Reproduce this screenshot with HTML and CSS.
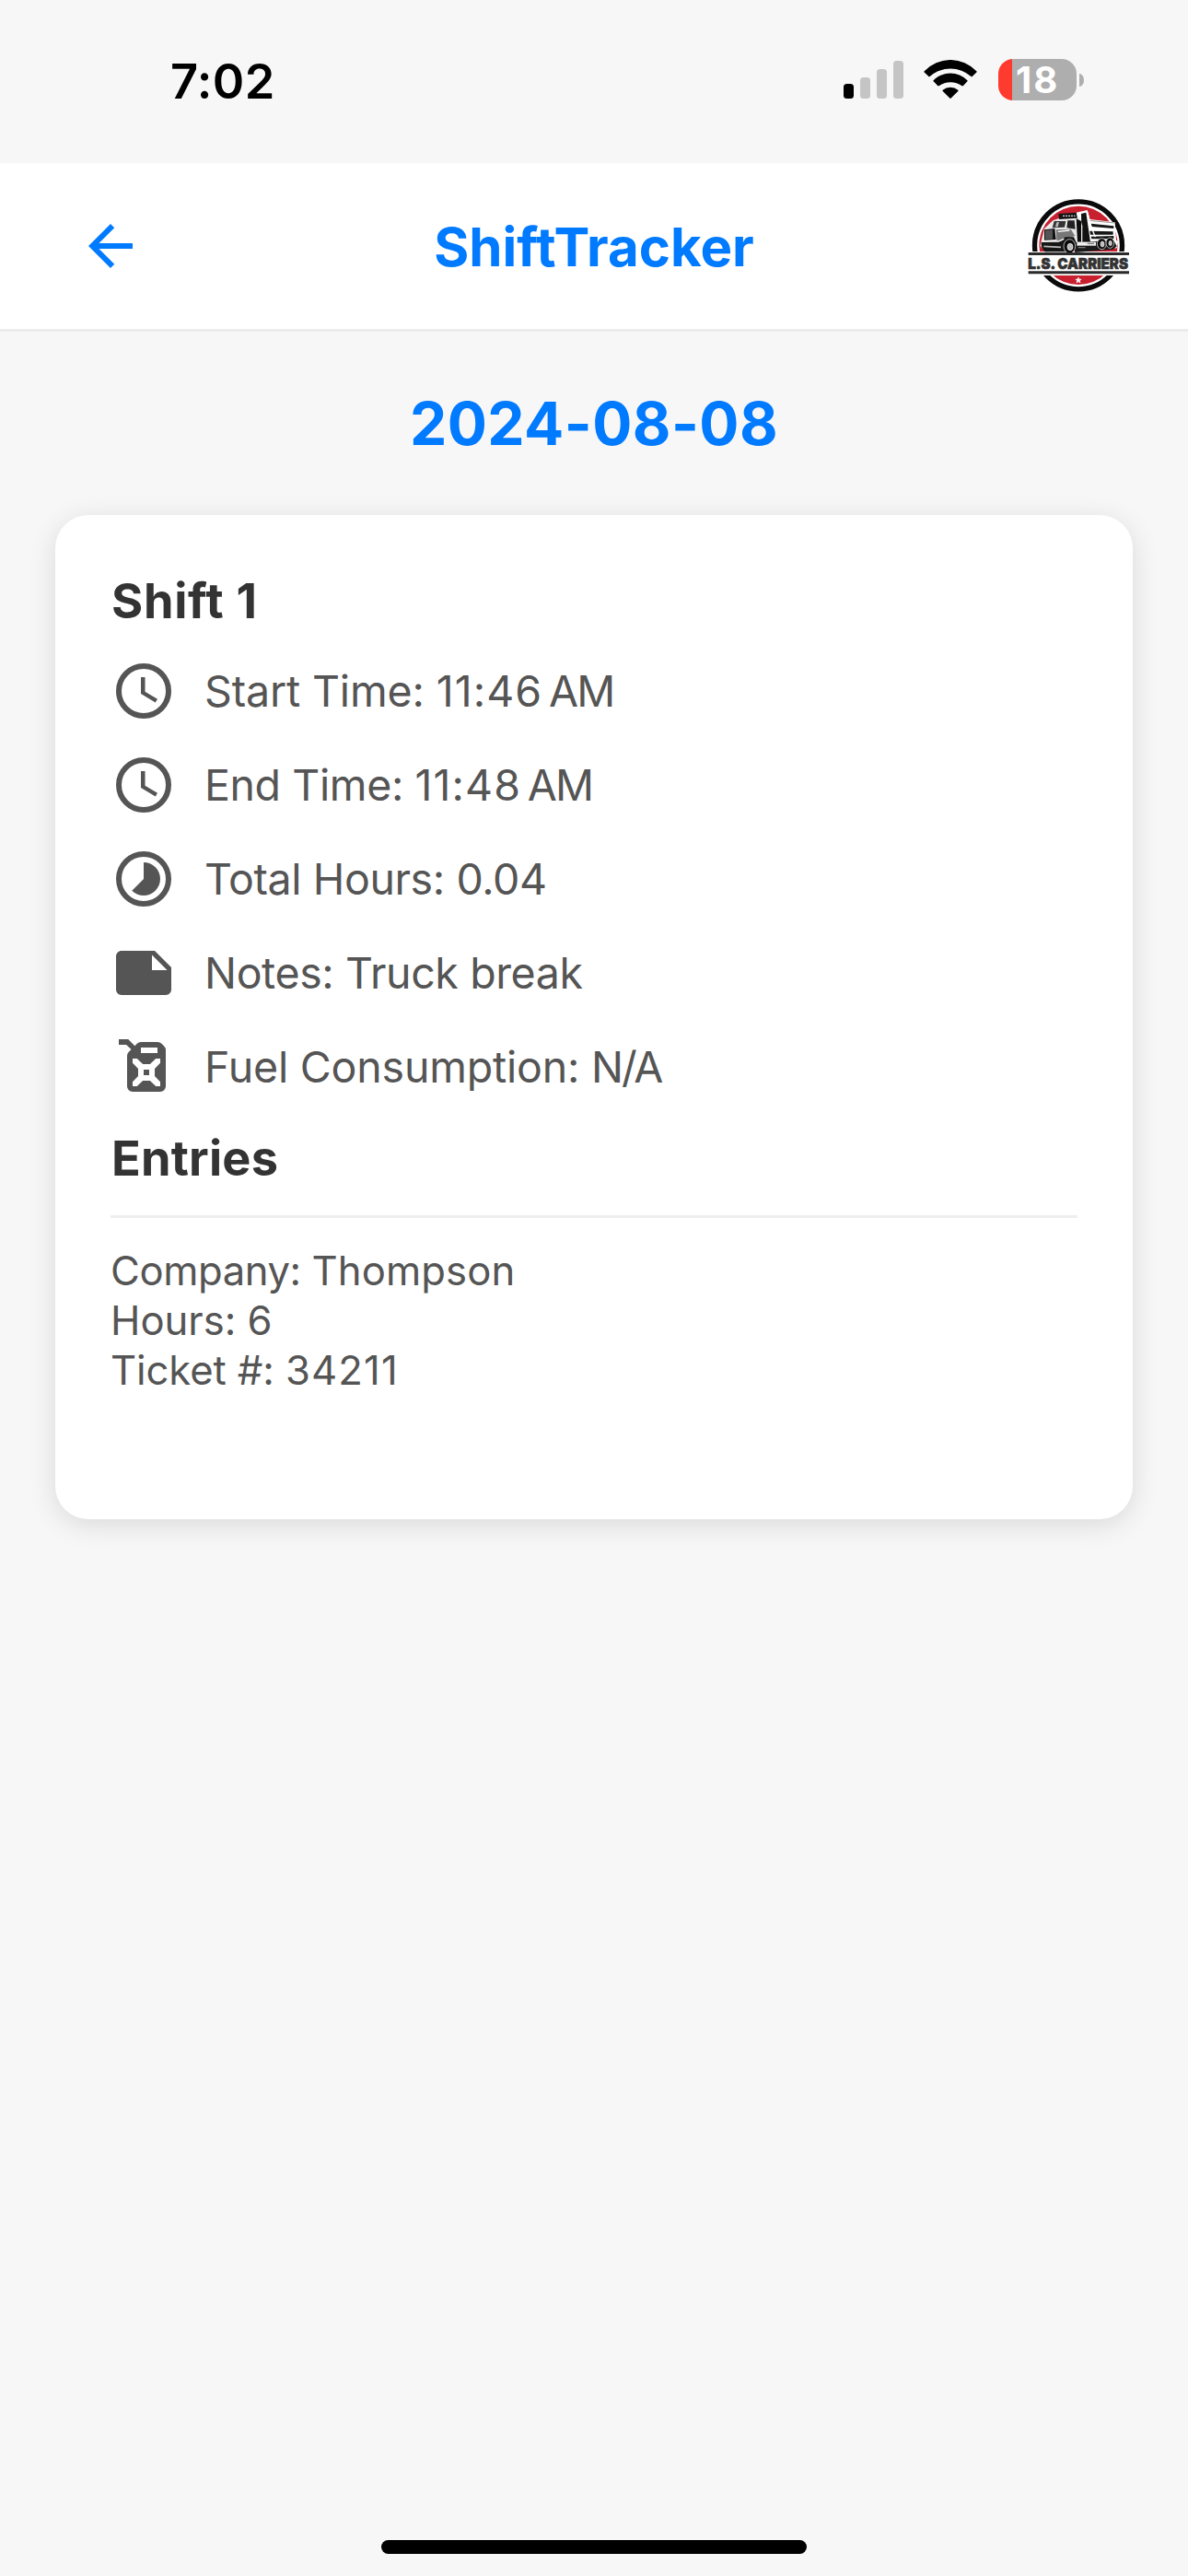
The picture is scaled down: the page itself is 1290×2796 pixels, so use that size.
FILE: index.html
```html
<!DOCTYPE html>
<html lang="en">
<head>
<meta charset="utf-8">
<title>ShiftTracker</title>
<link rel="stylesheet" href="styles.css">
</head>
<body>
<div class="screen">
  <div class="status-bar">
    <span class="clock">7:02</span>
    <div class="status-icons">
      <div class="signal"><i class="bar bar-1"></i><i class="bar bar-2"></i><i class="bar bar-3"></i><i class="bar bar-4"></i></div>
      <svg class="wifi" viewBox="370 75 175 126" aria-hidden="true">
        <path d="M372 111.500A117.500 117.500 0 0 1 543 111.500Q545 113.500 543 115.500L529 129Q527.500 130.500 525.500 129A101.500 101.500 0 0 0 390 129Q388 130.500 386.500 129L372 115.500Q370.500 113.500 372 111.500Z"/>
        <path d="M402 141.500A77.500 77.500 0 0 1 513 141.500Q515 143 513 145L499 159.500Q497.500 161 495.500 159.500A67 67 0 0 0 420 159.500Q418 161 416.500 159.500L402 145Q400.500 143 402 141.500Z"/>
        <path d="M432.500 173.500A38 38 0 0 1 482.500 173.500Q484 175 482.500 177L459.500 200Q457.500 202 455.500 200L432.500 177Q431 175 432.500 173.500Z"/>
      </svg>
      <div class="battery"><div class="battery-body">18</div><div class="battery-cap"></div></div>
    </div>
  </div>

  <header class="app-header">
    <svg class="icon back" viewBox="0 0 24 24" aria-label="Back"><path d="M20 11H7.830l5.590-5.590L12 4l-8 8 8 8 1.410-1.410L7.830 13H20v-2z"/></svg>
    <h1 class="app-title">ShiftTracker</h1>
    <svg class="logo" viewBox="0 0 480 390" aria-label="L.S. Carriers">
      <circle cx="243" cy="199" r="142.500" fill="#fff" stroke="#0b0b0b" stroke-width="16"/>
      <circle cx="243" cy="199" r="128" fill="#c8202f"/>
      <rect x="76" y="219" width="336" height="78" fill="#fff"/>
      <!-- dump body -->
      <path d="M236 92l36-8 8 30 82 10 4 58 6 4-4 22-120 6-22-60z" fill="#fff"/>
      <path d="M252 96l16-4 14 96h-28z" fill="#111"/>
      <path d="M284 128l74 8v8l-72-6zM280 152l76 2v10h-74zM284 170l74-2v10h-72z" fill="#161616"/>
      <path d="M276 118l86 8" stroke="#999" stroke-width="3"/>
      <path d="M272 90l14 52 12 30" fill="none" stroke="#fff" stroke-width="4"/>
      <!-- cab and bonnet -->
      <path d="M160 118l28-10 58 0 10 28v56l-24 18-96 12-18-22 14-56z" fill="#e9e9e9"/>
      <path d="M178 96l58-4 4 18-60 4z" fill="#151515"/>
      <path d="M192 103h40" stroke="#ddd" stroke-width="4" stroke-dasharray="6 3"/>
      <path d="M164 120h38l-4 20-40 2z" fill="#343434"/>
      <path d="M172 124l8-1-4 16h-8z" fill="#bbb"/>
      <path d="M208 118h22l3 28-28-4z" fill="#222"/>
      <path d="M236 112l16 8v68h-12z" fill="#0d0d0d"/>
      <path d="M132 148l34-4 4 36-38 2z" fill="#111"/>
      <path d="M138 150v30M144 149v30M150 149v30M156 148v31" stroke="#ddd" stroke-width="2"/>
      <path d="M170 148l48-2 14 22-18 6-18 10-24-2z" fill="#777"/>
      <path d="M176 154l38-4" stroke="#fff" stroke-width="4"/>
      <path d="M122 188l66-4 12-12h28l10 22-20 26-84 0q-14-12-12-32z" fill="#161616"/>
      <path d="M124 186h54l18-8" fill="none" stroke="#fff" stroke-width="4"/>
      <path d="M130 202l56 3" stroke="#bbb" stroke-width="5"/>
      <path d="M228 190l130-8 10 20-12 10-124 10z" fill="#1a1a1a"/>
      <path d="M238 188h62v12h-62z" fill="#eee"/>
      <path d="M242 206h24M272 193h22" stroke="#777" stroke-width="4"/>
      <g fill="#0b0b0b" stroke="#fff" stroke-width="2">
        <ellipse cx="214" cy="202" rx="19" ry="23"/>
        <ellipse cx="319" cy="194" rx="15" ry="18"/>
        <ellipse cx="346" cy="191" rx="13" ry="17"/>
      </g>
      <g fill="#bbb" stroke="#fff" stroke-width="2">
        <ellipse cx="216" cy="204" rx="9" ry="11"/>
        <ellipse cx="321" cy="195" rx="6" ry="9"/>
        <ellipse cx="347" cy="192" rx="5" ry="8"/>
      </g>
      <path d="M80 222h328v9H80zM80 283h328v9H80z" fill="#2b2b2b"/>
      <text class="logo-text" x="79" y="276" textLength="326" lengthAdjust="spacingAndGlyphs">L.S. CARRIERS</text>
      <path d="M243 303l2.400 6.600h7l-5.600 4.200 2.100 6.900-5.900-4.200-5.900 4.200 2.100-6.900-5.600-4.200h7z" fill="#fff" stroke="#fff" stroke-width="2"/>
    </svg>
  </header>

  <main class="content">
    <h2 class="date">2024-08-08</h2>
    <section class="card">
      <h3 class="heading shift-name">Shift 1</h3>
      <ul class="details">
        <li class="row"><svg class="icon" viewBox="0 0 24 24"><circle class="ring" cx="12" cy="12" r="9"/><path d="M12.500 7H11v6l5.250 3.150.750-1.230-4.500-2.670z"/></svg><span><span class="label-start">Start Time: </span><span class="time">11:46</span><span class="meridiem">&#8239;AM</span></span></li>
        <li class="row"><svg class="icon" viewBox="0 0 24 24"><circle class="ring" cx="12" cy="12" r="9"/><path d="M12.500 7H11v6l5.250 3.150.750-1.230-4.500-2.670z"/></svg><span>End Time: <span class="time">11:48</span><span class="meridiem">&#8239;AM</span></span></li>
        <li class="row"><svg class="icon" viewBox="0 0 24 24"><circle class="ring" cx="12" cy="12" r="9"/><path d="M16.240 7.760C15.070 6.590 13.540 6 12 6v6l-4.240 4.240c2.340 2.340 6.140 2.340 8.490 0 2.340-2.340 2.340-6.140-.010-8.480z"/></svg><span>Total Hours: 0.04</span></li>
        <li class="row"><svg class="icon" viewBox="0 0 24 24"><path d="M22 10l-6-6H4c-1.100 0-2 .900-2 2v12.010c0 1.100.900 1.990 2 1.990l16-.010c1.100 0 2-.890 2-1.990v-8zm-7-4.500l5.500 5.500H15V5.500z"/></svg><span>Notes: Truck break</span></li>
        <li class="row"><svg class="icon" viewBox="0 0 24 24"><path fill-rule="evenodd" d="M3 2h3.400l2.400 2.400.800-.800Q10.200 3 11 3h6q.900 0 1.500.600l.900.900Q20 5.100 20 6v13a2 2 0 0 1-2 2H8a2 2 0 0 1-2-2V8q0-.800.600-1.400l.900-.900L5.700 4H3zM11 5v2h6V5zM8 9v1.600l2 2.100v2.600l-2 2.100V19h1.600l2.100-2h2.600l2.100 2H18v-1.600l-2-2.100v-2.600l2-2.100V9h-1.600l-2.100 2h-2.600L9.600 9zM12 13h2v2h-2z"/></svg><span><span class="label-fuel">Fuel Consumption: </span><span class="fuel">N/A</span></span></li>
      </ul>
      <h3 class="heading">Entries</h3>
      <div class="entry">
        <p><span class="label-company">Company: </span><span class="company">Thompson</span></p>
        <p>Hours: 6</p>
        <p><span class="label-ticket">Ticket #: </span><span class="ticket">34211</span></p>
      </div>
    </section>
  </main>
  <div class="home-indicator"></div>
</div>
</body>
</html>
```
FILE: styles.css
```css
* { box-sizing: border-box; margin: 0; padding: 0; }

body {
  background: #f7f7f7;
  font-family: Inter, "Liberation Sans", sans-serif;
}

.screen {
  display: flex;
  flex-direction: column;
  width: 1290px;
  height: 2796px;
}

.status-bar {
  display: flex;
  justify-content: space-between;
  height: 177px;
  padding: 64px 113px 0 185px;
}

.clock {
  height: 48px;
  font-size: 52.300px;
  font-weight: 600;
  line-height: 48px;
  letter-spacing: 0.400px;
}

.status-icons { display: flex; height: 45px; }

.signal {
  display: flex;
  align-items: flex-end;
  gap: 7px;
  height: 43px;
}

.bar {
  width: 11px;
  border-radius: 3.500px;
  background: #c5c5c5;
}
.bar-1 { height: 16px; background: #000; }
.bar-2 { height: 23px; }
.bar-3 { height: 32px; }
.bar-4 { height: 41px; }

.wifi {
  width: 58px;
  height: 42px;
  margin: 1px 23px 0 22px;
}

.battery { display: flex; align-items: center; gap: 3px; }

.battery-body {
  width: 85px;
  height: 45px;
  padding-left: 19px;
  border-radius: 16px;
  background: linear-gradient(to right, #ff3b30 15px, #aeaeae 15px);
  color: #fff;
  font-size: 40px;
  font-weight: 700;
  line-height: 45px;
  letter-spacing: 2px;
}

.battery-cap {
  width: 5px;
  height: 14px;
  border-radius: 0 5px 5px 0 / 0 7px 7px 0;
  background: #aeaeae;
}

.app-header {
  display: grid;
  grid-template-columns: 1fr auto 1fr;
  align-items: center;
  height: 183px;
  padding: 0 40px 0 84px;
  border-bottom: 3px solid #ececec;
  background: #fff;
}

.icon { flex: none; width: 72px; height: 72px; fill: #555; }
.icon.back { fill: #007aff; }
.ring { fill: none; stroke: #555; stroke-width: 2; }

.app-title {
  padding-top: 2px;
  margin-right: 44px;
  color: #007aff;
  font-size: 58.200px;
  font-weight: 700;
  font-variant-ligatures: none;
  line-height: 72px;
}

.logo { justify-self: end; width: 160px; height: 130px; margin-top: -4px; }
.logo-text {
  font-size: 49.500px;
  font-weight: 900;
  fill: #333;
  stroke: #333;
  stroke-width: 2px;
}

.content { flex: 1; padding: 60px; }

.date {
  margin-bottom: 59px;
  color: #007aff;
  font-size: 64px;
  font-weight: 700;
  line-height: 80px;
  letter-spacing: 0.450px;
  text-align: center;
}

.card {
  height: 1090px;
  padding: 60px;
  border-radius: 36px;
  background: #fff;
  box-shadow: 0 6px 30px rgba(0, 0, 0, 0.120);
}

.heading {
  padding-left: 1px;
  color: #333;
  font-size: 52.300px;
  font-weight: 700;
  line-height: 66px;
  letter-spacing: 0.200px;
}
.shift-name { letter-spacing: 0.700px; }

.details {
  display: grid;
  gap: 30px;
  margin: 29px 0 30px;
  list-style: none;
}

.row {
  display: flex;
  align-items: center;
  gap: 30px;
  height: 72px;
  color: #555;
  font-size: 46.500px;
  letter-spacing: -0.400px;
  white-space: pre;
}
.label-start { letter-spacing: -0.150px; }
.label-fuel { letter-spacing: -0.200px; }
.time { letter-spacing: 1.100px; }
.meridiem { letter-spacing: -1.800px; }
.fuel { letter-spacing: -2.200px; }

.entry {
  margin-top: 29px;
  padding-top: 31px;
  border-top: 3px solid #eee;
  color: #555;
  font-size: 43.600px;
  line-height: 54px;
}
.label-company { letter-spacing: -0.400px; }
.company { letter-spacing: 0.100px; }
.label-ticket { letter-spacing: -0.100px; }
.ticket { letter-spacing: 1.150px; }

.home-indicator {
  align-self: center;
  width: 462px;
  height: 15px;
  margin-bottom: 24px;
  border-radius: 8px;
  background: #000;
}
```
